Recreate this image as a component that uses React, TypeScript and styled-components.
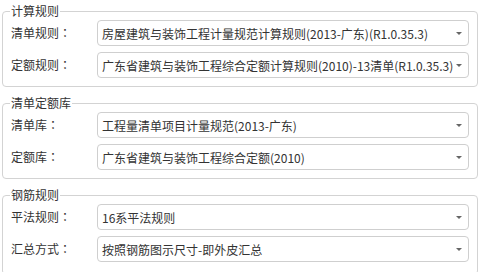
import React from "react";
import styled, { createGlobalStyle } from "styled-components";

const Global = createGlobalStyle`
  html, body { margin: 0; padding: 0; background: #fff; }
  body {
    font-family: "Noto Sans CJK SC", "Noto Sans", sans-serif;
    font-size: 12px;
    color: #333;
  }
`;

const Page = styled.div`
  width: 481px;
  height: 272px;
  overflow: hidden;
  padding-top: 3px;
  box-sizing: border-box;
`;

const Group = styled.fieldset`
  margin: 0 3px 8px 2px;
  padding: 1px 8px 8px 8px;
  border: 1px solid #d3d3d3;
  border-radius: 4px;
  min-width: 0;
  display: flex;
  flex-direction: column;
  gap: 6px;
  &:last-child {
    padding-bottom: 12px;
  }
`;

const Legend = styled.legend`
  padding: 0 1px;
  margin-left: -1px;
  line-height: 16px;
  font-size: 12px;
  color: #333;
`;

const Row = styled.div`
  display: grid;
  grid-template-columns: 86px 1fr;
  align-items: center;
`;

const Label = styled.span`
  line-height: 16px;
  color: #333;
  white-space: nowrap;
`;

const Colon = styled.span`
  font-family: "Noto Sans CJK TC", "Noto Sans CJK SC", sans-serif;
`;

const Select = styled.div`
  position: relative;
  height: 26px;
  box-sizing: border-box;
  border: 1px solid #cfcfcf;
  border-radius: 4px;
  padding: 0 12px 0 4px;
  display: flex;
  align-items: center;
  white-space: nowrap;
  overflow: hidden;
  color: #333;
  background: #fff;
`;

const Caret = styled.span`
  position: absolute;
  right: 6px;
  top: 50%;
  margin-top: -1px;
  width: 0;
  height: 0;
  border-left: 3px solid transparent;
  border-right: 3px solid transparent;
  border-top: 3px solid #666;
`;

type Field = { label: string; value: string };
type Section = { title: string; fields: Field[] };

const sections: Section[] = [
  {
    title: "计算规则",
    fields: [
      { label: "清单规则", value: "房屋建筑与装饰工程计量规范计算规则(2013-广东)(R1.0.35.3)" },
      { label: "定额规则", value: "广东省建筑与装饰工程综合定额计算规则(2010)-13清单(R1.0.35.3)" },
    ],
  },
  {
    title: "清单定额库",
    fields: [
      { label: "清单库", value: "工程量清单项目计量规范(2013-广东)" },
      { label: "定额库", value: "广东省建筑与装饰工程综合定额(2010)" },
    ],
  },
  {
    title: "钢筋规则",
    fields: [
      { label: "平法规则", value: "16系平法规则" },
      { label: "汇总方式", value: "按照钢筋图示尺寸-即外皮汇总" },
    ],
  },
];

export default function App() {
  return (
    <>
      <Global />
      <Page>
        {sections.map((s) => (
          <Group key={s.title}>
            <Legend>{s.title}</Legend>
            {s.fields.map((f) => (
              <Row key={f.label}>
                <Label>
                  {f.label}
                  <Colon>：</Colon>
                </Label>
                <Select>
                  {f.value}
                  <Caret />
                </Select>
              </Row>
            ))}
          </Group>
        ))}
      </Page>
    </>
  );
}
